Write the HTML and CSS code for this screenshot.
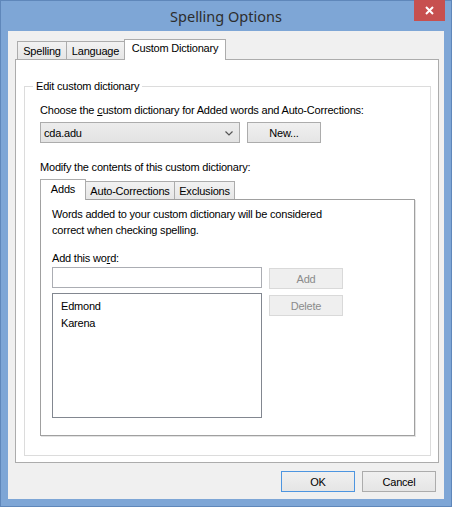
FILE: index.html
```html
<!DOCTYPE html>
<html lang="en">
<head>
  <meta charset="utf-8">
  <title>Spelling Options</title>
  <link rel="stylesheet" href="styles.css">
</head>
<body>

  <div class="window">
    <div class="titlebar">
      <span class="title">Spelling Options</span>
      <button class="close" title="Close">
        <svg width="9" height="9" viewBox="0 0 9 9">
          <path d="M1 1L8 8M8 1L1 8" stroke="#fff" stroke-width="2" fill="none"/>
        </svg>
      </button>
    </div>

    <div class="client">
      <div class="tabs">
        <div class="tab tab-spelling">Spelling</div>
        <div class="tab tab-language">Language</div>
        <div class="tab tab-custom active">Custom Dictionary</div>
      </div>

      <div class="panel">
        <fieldset class="group">
          <legend>Edit custom dictionary</legend>

          <div class="label">Choose the <u>c</u>ustom dictionary for Added words and Auto-Corrections:</div>
          <div class="dict-row">
            <div class="combo">
              <span>cda.adu</span>
              <svg class="chevron" width="8" height="5" viewBox="0 0 8 5">
                <path d="M0.5 0.5L4 4L7.5 0.5" stroke="#555" stroke-width="1.2" fill="none"/>
              </svg>
            </div>
            <button class="btn">New...</button>
          </div>

          <div class="label label-modify">Modify the contents of this custom dictionary:</div>
          <div class="subtabs">
            <div class="subtab sub-adds active">Adds</div>
            <div class="subtab sub-auto">Auto-Corrections</div>
            <div class="subtab sub-excl">Exclusions</div>
          </div>

          <div class="subpanel">
            <p class="hint">Words added to your custom dictionary will be considered<br>correct when checking spelling.</p>
            <div class="label">Add this wo<u>r</u>d:</div>
            <div class="editor">
              <div class="fields">
                <div class="input"></div>
                <div class="list">
                  <div class="item">Edmond</div>
                  <div class="item">Karena</div>
                </div>
              </div>
              <div class="actions">
                <button class="btn" disabled>Add</button>
                <button class="btn" disabled>Delete</button>
              </div>
            </div>
          </div>
        </fieldset>
      </div>

      <div class="footer">
        <button class="btn default">OK</button>
        <button class="btn">Cancel</button>
      </div>
    </div>
  </div>

</body>
</html>
```

FILE: styles.css
```css
    html {
      box-sizing: border-box;
    }

    *, *:before, *:after {
      box-sizing: inherit;
    }

    body {
      margin: 0;
      font-family: "Liberation Sans", Arial, sans-serif;
      font-size: 11px;
      letter-spacing: -0.2px;
      color: #000;
    }

    /* window frame */

    .window {
      width: 452px;
      height: 507px;
      border: 1px solid #5f87ba;
      background: #7ea6d6;
      display: flex;
      flex-direction: column;
    }

    .titlebar {
      height: 30px;
      display: flex;
      align-items: center;
      justify-content: center;
      position: relative;
    }

    .title {
      font-family: "Noto Sans", sans-serif;
      font-size: 14.5px;
      letter-spacing: 0;
      color: #2d2d2d;
      margin-top: -1px;
    }

    .close {
      position: absolute;
      top: -1px;
      right: 6px;
      width: 31px;
      height: 21px;
      border: 0;
      padding: 0;
      background: #c7504f;
      display: flex;
      align-items: center;
      justify-content: center;
    }

    .client {
      flex: 1;
      margin: 0 7px 7px;
      background: #f0f0f0;
      display: flex;
      flex-direction: column;
    }

    /* top tabs */

    .tabs {
      display: flex;
      align-items: flex-end;
      height: 20px;
      margin-top: 8px;
      padding-left: 9px;
      position: relative;
      z-index: 1;
    }

    .tab {
      height: 18px;
      line-height: 18px;
      text-align: center;
      border: 1px solid #acacac;
      border-bottom: 0;
      background: linear-gradient(#f2f2f2, #e6e6e6);
      margin-right: -1px;
    }

    .tab-spelling { width: 50px; }
    .tab-language { width: 59px; }

    .tab.active {
      width: 102px;
      height: 21px;
      line-height: 17px;
      margin-bottom: -1px;
      background: #fff;
    }

    .panel {
      height: 404px;
      margin: 0 5px 0 7px;
      border: 1px solid #acacac;
      background: #fff;
      display: flex;
      flex-direction: column;
      padding: 20px 7px 6px 8px;
    }

    /* group box */

    .group {
      flex: 1;
      margin: 0;
      min-width: 0;
      border: 1px solid #dcdcdc;
      padding: 11px 15px 0;
    }

    .group legend {
      margin-left: -7px;
      padding: 0 3px;
      line-height: 13px;
    }

    .label {
      line-height: 13px;
    }

    .dict-row {
      display: flex;
      gap: 7px;
      margin-top: 5px;
    }

    .combo {
      width: 200px;
      height: 21px;
      border: 1px solid #acacac;
      background: linear-gradient(#ececec, #e3e3e3);
      display: flex;
      align-items: center;
      justify-content: space-between;
      padding: 0 6px 0 3px;
    }

    .chevron {
      margin-top: 1px;
    }

    .btn {
      width: 74px;
      height: 21px;
      padding: 0;
      border: 1px solid #acacac;
      background: linear-gradient(#f0f0f0, #e5e5e5);
      font: inherit;
      letter-spacing: inherit;
      color: #000;
    }

    .btn:disabled {
      border-color: #d9d9d9;
      background: #efefef;
      color: #8b8b8b;
    }

    .btn.default {
      border-color: #4d95e0;
    }

    .label-modify {
      margin-top: 18px;
    }

    /* inner tabs */

    .subtabs {
      display: flex;
      align-items: flex-end;
      height: 20px;
      margin-top: 5px;
      position: relative;
      z-index: 1;
    }

    .subtab {
      height: 18px;
      line-height: 19px;
      text-align: center;
      border: 1px solid #acacac;
      border-bottom: 0;
      background: linear-gradient(#f2f2f2, #e6e6e6);
      margin-right: -1px;
    }

    .sub-adds { width: 46px; }
    .sub-auto { width: 90px; }
    .sub-excl { width: 61px; }

    .subtab.active {
      height: 21px;
      line-height: 18px;
      margin-bottom: -1px;
      background: #fff;
    }

    .subpanel {
      width: 375px;
      height: 237px;
      border: 1px solid #a0a0a0;
      box-shadow: 1px 1px 0 #e3e3e3;
      padding: 6px 11px 0;
    }

    .hint {
      margin: 0 0 14px;
      line-height: 16px;
    }

    .editor {
      display: flex;
      gap: 7px;
      margin-top: 2px;
    }

    .fields {
      display: flex;
      flex-direction: column;
      gap: 5px;
    }

    .input {
      width: 210px;
      height: 21px;
      border: 1px solid #abadb3;
    }

    .list {
      width: 210px;
      height: 125px;
      border: 1px solid #828790;
      padding: 4px 8px;
    }

    .item {
      line-height: 17px;
    }

    .actions {
      display: flex;
      flex-direction: column;
      gap: 6px;
      padding-top: 1px;
    }

    /* dialog buttons */

    .footer {
      display: flex;
      justify-content: flex-end;
      gap: 7px;
      padding: 8px 8px 0;
    }
```
